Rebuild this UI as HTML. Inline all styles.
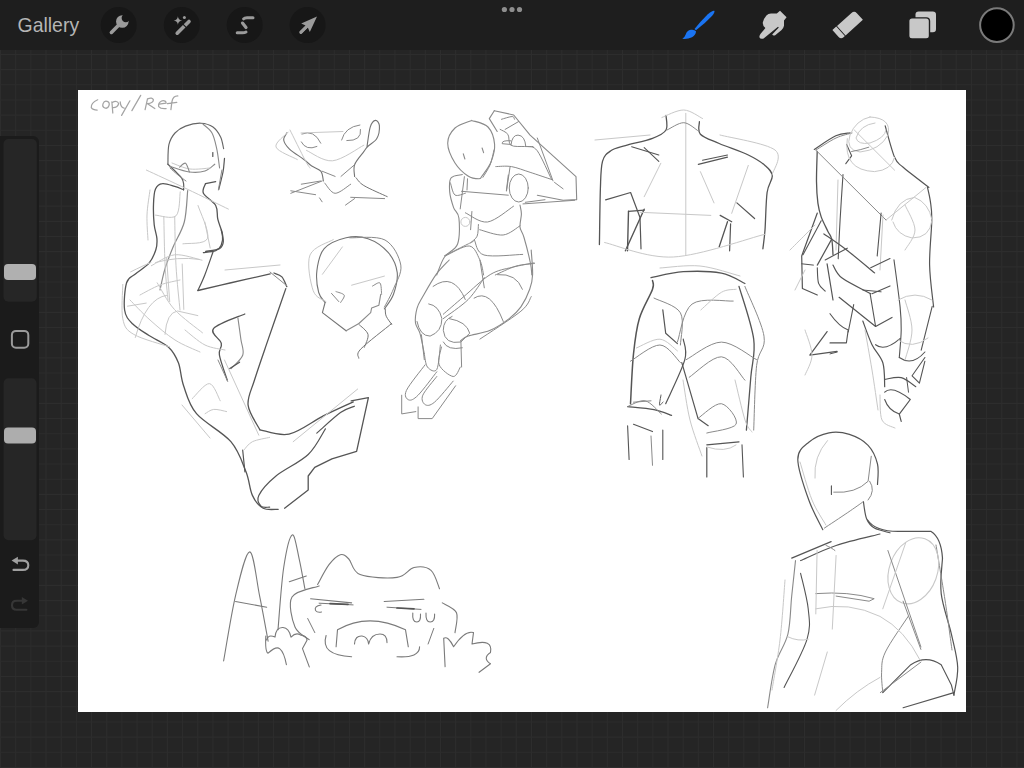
<!DOCTYPE html>
<html><head><meta charset="utf-8">
<style>
html,body{margin:0;padding:0;width:1024px;height:768px;overflow:hidden;background:#252525;font-family:"Liberation Sans",sans-serif;}
#grid{position:absolute;left:0;top:0}
#topbar{position:absolute;left:0;top:0;width:1024px;height:50px;background:#1e1e1e}
#canvas{position:absolute;left:78px;top:90px;width:888px;height:622px;background:#fff}
#side{position:absolute;left:0;top:136px;width:39px;height:492px;background:#1b1b1b;border-radius:0 6px 6px 0}
</style></head><body>
<svg id="grid" width="1024" height="768"><g stroke="#2d2d2d" stroke-width="1.1">
<line x1="0.53" y1="50" x2="0.53" y2="768"/>
<line x1="15.70" y1="50" x2="15.70" y2="768"/>
<line x1="30.87" y1="50" x2="30.87" y2="768"/>
<line x1="46.04" y1="50" x2="46.04" y2="768"/>
<line x1="61.21" y1="50" x2="61.21" y2="768"/>
<line x1="76.38" y1="50" x2="76.38" y2="768"/>
<line x1="91.55" y1="50" x2="91.55" y2="768"/>
<line x1="106.72" y1="50" x2="106.72" y2="768"/>
<line x1="121.89" y1="50" x2="121.89" y2="768"/>
<line x1="137.06" y1="50" x2="137.06" y2="768"/>
<line x1="152.23" y1="50" x2="152.23" y2="768"/>
<line x1="167.40" y1="50" x2="167.40" y2="768"/>
<line x1="182.57" y1="50" x2="182.57" y2="768"/>
<line x1="197.74" y1="50" x2="197.74" y2="768"/>
<line x1="212.91" y1="50" x2="212.91" y2="768"/>
<line x1="228.08" y1="50" x2="228.08" y2="768"/>
<line x1="243.25" y1="50" x2="243.25" y2="768"/>
<line x1="258.42" y1="50" x2="258.42" y2="768"/>
<line x1="273.59" y1="50" x2="273.59" y2="768"/>
<line x1="288.76" y1="50" x2="288.76" y2="768"/>
<line x1="303.93" y1="50" x2="303.93" y2="768"/>
<line x1="319.10" y1="50" x2="319.10" y2="768"/>
<line x1="334.27" y1="50" x2="334.27" y2="768"/>
<line x1="349.44" y1="50" x2="349.44" y2="768"/>
<line x1="364.61" y1="50" x2="364.61" y2="768"/>
<line x1="379.78" y1="50" x2="379.78" y2="768"/>
<line x1="394.95" y1="50" x2="394.95" y2="768"/>
<line x1="410.12" y1="50" x2="410.12" y2="768"/>
<line x1="425.29" y1="50" x2="425.29" y2="768"/>
<line x1="440.46" y1="50" x2="440.46" y2="768"/>
<line x1="455.63" y1="50" x2="455.63" y2="768"/>
<line x1="470.80" y1="50" x2="470.80" y2="768"/>
<line x1="485.97" y1="50" x2="485.97" y2="768"/>
<line x1="501.14" y1="50" x2="501.14" y2="768"/>
<line x1="516.31" y1="50" x2="516.31" y2="768"/>
<line x1="531.48" y1="50" x2="531.48" y2="768"/>
<line x1="546.65" y1="50" x2="546.65" y2="768"/>
<line x1="561.82" y1="50" x2="561.82" y2="768"/>
<line x1="576.99" y1="50" x2="576.99" y2="768"/>
<line x1="592.16" y1="50" x2="592.16" y2="768"/>
<line x1="607.33" y1="50" x2="607.33" y2="768"/>
<line x1="622.50" y1="50" x2="622.50" y2="768"/>
<line x1="637.67" y1="50" x2="637.67" y2="768"/>
<line x1="652.84" y1="50" x2="652.84" y2="768"/>
<line x1="668.01" y1="50" x2="668.01" y2="768"/>
<line x1="683.18" y1="50" x2="683.18" y2="768"/>
<line x1="698.35" y1="50" x2="698.35" y2="768"/>
<line x1="713.52" y1="50" x2="713.52" y2="768"/>
<line x1="728.69" y1="50" x2="728.69" y2="768"/>
<line x1="743.86" y1="50" x2="743.86" y2="768"/>
<line x1="759.03" y1="50" x2="759.03" y2="768"/>
<line x1="774.20" y1="50" x2="774.20" y2="768"/>
<line x1="789.37" y1="50" x2="789.37" y2="768"/>
<line x1="804.54" y1="50" x2="804.54" y2="768"/>
<line x1="819.71" y1="50" x2="819.71" y2="768"/>
<line x1="834.88" y1="50" x2="834.88" y2="768"/>
<line x1="850.05" y1="50" x2="850.05" y2="768"/>
<line x1="865.22" y1="50" x2="865.22" y2="768"/>
<line x1="880.39" y1="50" x2="880.39" y2="768"/>
<line x1="895.56" y1="50" x2="895.56" y2="768"/>
<line x1="910.73" y1="50" x2="910.73" y2="768"/>
<line x1="925.90" y1="50" x2="925.90" y2="768"/>
<line x1="941.07" y1="50" x2="941.07" y2="768"/>
<line x1="956.24" y1="50" x2="956.24" y2="768"/>
<line x1="971.41" y1="50" x2="971.41" y2="768"/>
<line x1="986.58" y1="50" x2="986.58" y2="768"/>
<line x1="1001.75" y1="50" x2="1001.75" y2="768"/>
<line x1="1016.92" y1="50" x2="1016.92" y2="768"/>
<line x1="0" y1="54.46" x2="1024" y2="54.46"/>
<line x1="0" y1="69.63" x2="1024" y2="69.63"/>
<line x1="0" y1="84.80" x2="1024" y2="84.80"/>
<line x1="0" y1="99.97" x2="1024" y2="99.97"/>
<line x1="0" y1="115.14" x2="1024" y2="115.14"/>
<line x1="0" y1="130.31" x2="1024" y2="130.31"/>
<line x1="0" y1="145.48" x2="1024" y2="145.48"/>
<line x1="0" y1="160.65" x2="1024" y2="160.65"/>
<line x1="0" y1="175.82" x2="1024" y2="175.82"/>
<line x1="0" y1="190.99" x2="1024" y2="190.99"/>
<line x1="0" y1="206.16" x2="1024" y2="206.16"/>
<line x1="0" y1="221.33" x2="1024" y2="221.33"/>
<line x1="0" y1="236.50" x2="1024" y2="236.50"/>
<line x1="0" y1="251.67" x2="1024" y2="251.67"/>
<line x1="0" y1="266.84" x2="1024" y2="266.84"/>
<line x1="0" y1="282.01" x2="1024" y2="282.01"/>
<line x1="0" y1="297.18" x2="1024" y2="297.18"/>
<line x1="0" y1="312.35" x2="1024" y2="312.35"/>
<line x1="0" y1="327.52" x2="1024" y2="327.52"/>
<line x1="0" y1="342.69" x2="1024" y2="342.69"/>
<line x1="0" y1="357.86" x2="1024" y2="357.86"/>
<line x1="0" y1="373.03" x2="1024" y2="373.03"/>
<line x1="0" y1="388.20" x2="1024" y2="388.20"/>
<line x1="0" y1="403.37" x2="1024" y2="403.37"/>
<line x1="0" y1="418.54" x2="1024" y2="418.54"/>
<line x1="0" y1="433.71" x2="1024" y2="433.71"/>
<line x1="0" y1="448.88" x2="1024" y2="448.88"/>
<line x1="0" y1="464.05" x2="1024" y2="464.05"/>
<line x1="0" y1="479.22" x2="1024" y2="479.22"/>
<line x1="0" y1="494.39" x2="1024" y2="494.39"/>
<line x1="0" y1="509.56" x2="1024" y2="509.56"/>
<line x1="0" y1="524.73" x2="1024" y2="524.73"/>
<line x1="0" y1="539.90" x2="1024" y2="539.90"/>
<line x1="0" y1="555.07" x2="1024" y2="555.07"/>
<line x1="0" y1="570.24" x2="1024" y2="570.24"/>
<line x1="0" y1="585.41" x2="1024" y2="585.41"/>
<line x1="0" y1="600.58" x2="1024" y2="600.58"/>
<line x1="0" y1="615.75" x2="1024" y2="615.75"/>
<line x1="0" y1="630.92" x2="1024" y2="630.92"/>
<line x1="0" y1="646.09" x2="1024" y2="646.09"/>
<line x1="0" y1="661.26" x2="1024" y2="661.26"/>
<line x1="0" y1="676.43" x2="1024" y2="676.43"/>
<line x1="0" y1="691.60" x2="1024" y2="691.60"/>
<line x1="0" y1="706.77" x2="1024" y2="706.77"/>
<line x1="0" y1="721.94" x2="1024" y2="721.94"/>
<line x1="0" y1="737.11" x2="1024" y2="737.11"/>
<line x1="0" y1="752.28" x2="1024" y2="752.28"/>
<line x1="0" y1="767.45" x2="1024" y2="767.45"/>
</g></svg>
<div id="canvas"></div>
<svg id="sk" width="1024" height="768" style="position:absolute;left:0;top:0" fill="none" stroke-linecap="round" stroke-linejoin="round">
<path d="M97.7 99.8 Q90.9 102.7 91.3 107.6 Q92.8 110 97.2 110" stroke="#a4a4a4" stroke-width="1.25"/>
<ellipse cx="106" cy="104.7" rx="3.1" ry="3.5" transform="rotate(20 106 104.7)" stroke="#a4a4a4" stroke-width="1.25"/>
<path d="M111.9 101.8 L112.8 113 M111.9 102.7 Q117.2 99.8 118.7 103.7 Q117.2 107.6 113.3 107.6" stroke="#a4a4a4" stroke-width="1.25"/>
<path d="M120.2 101.8 Q120.6 107.6 124.1 108.1 M129.9 100.8 L121.6 115.4" stroke="#a4a4a4" stroke-width="1.25"/>
<path d="M140.7 95.4 L131.9 110.6" stroke="#a4a4a4" stroke-width="1.25"/>
<path d="M147.5 98.8 L145.1 109.6 M147.5 98.8 Q152.4 96.9 153.4 99.8 Q153.4 103.2 147.5 103.7 L154.8 108.6" stroke="#a4a4a4" stroke-width="1.25"/>
<path d="M159.2 104.2 L166.1 103.2 Q166.1 100.3 162.1 100.8 Q157.8 102.7 158.7 106.6 Q160.7 109.1 166.1 108.6" stroke="#a4a4a4" stroke-width="1.25"/>
<path d="M177.8 95.9 Q172.9 95.9 171.9 101.8 L170.9 109.6 M167.5 103.7 L176.8 102.3" stroke="#a4a4a4" stroke-width="1.25"/>
<path d="M167.9 164.2 C168.1 160.9 167.7 149.9 168.9 144.7 C170.1 139.5 172.2 136.1 175.0 133.0 C177.8 129.9 181.2 127.7 185.5 126.1 C189.8 124.5 196.4 123.0 201.0 123.2 C205.6 123.4 209.7 124.7 213.0 127.0 C216.3 129.3 218.8 133.3 220.6 136.9 C222.4 140.5 223.1 146.7 223.6 148.6" stroke="#666" stroke-width="1.15"/>
<path d="M203.0 124.2 C204.5 125.7 209.7 128.9 212.0 133.0 C214.3 137.1 215.4 142.8 216.7 148.6 C218.0 154.4 219.1 164.8 219.6 168.0" stroke="#8a8a8a" stroke-width="1.1"/>
<path d="M224.5 158.4 C224.2 160.7 224.0 166.8 223.0 172.0 C222.0 177.2 219.4 186.7 218.7 189.6" stroke="#555555" stroke-width="1.2"/>
<path d="M221.9 170.0 L218.4 189.8" stroke="#8a8a8a" stroke-width="1.0"/>
<path d="M167.9 164.2 C169.1 165.3 172.7 168.7 175.0 171.0 C177.3 173.3 180.2 175.8 181.6 177.9 C183.0 180.0 183.3 181.7 183.6 183.7 C183.9 185.7 183.6 188.8 183.6 189.8" stroke="#5e5e5e" stroke-width="1.2"/>
<path d="M170.0 168.0 C171.3 169.2 175.3 172.8 178.0 175.0 C180.7 177.2 184.7 180.0 186.0 181.0" stroke="#8a8a8a" stroke-width="1.0"/>
<path d="M169.8 166.2 C173.1 167.2 183.5 171.2 189.4 172.0 C195.3 172.8 200.8 172.3 205.0 171.0 C209.2 169.7 213.2 165.3 214.8 164.2" stroke="#8a8a8a" stroke-width="1.1"/>
<path d="M172.0 163.0 C175.0 164.0 183.7 168.2 190.0 169.0 C196.3 169.8 206.7 168.2 210.0 168.0" stroke="#c8c8c8" stroke-width="1.0"/>
<path d="M179.6 167.1 C180.6 166.4 183.9 162.4 185.5 163.2 C187.1 164.0 188.8 170.5 189.4 172.0" stroke="#8a8a8a" stroke-width="1.1"/>
<path d="M212.8 152.5 L212.8 156.5" stroke="#555555" stroke-width="1.2"/>
<path d="M205.5 183.7 L215.7 181.6" stroke="#555555" stroke-width="1.2"/>
<path d="M205.5 183.7 C205.2 185.3 201.7 189.7 203.4 193.3 C205.1 196.9 213.3 201.2 215.7 205.5 C218.1 209.8 216.7 214.4 217.8 219.2 C218.9 224.0 221.9 230.0 222.5 234.3 C223.1 238.6 222.3 242.5 221.2 245.2 C220.1 247.9 218.7 249.4 215.7 250.7 C212.7 251.9 205.4 252.4 203.4 252.7" stroke="#555555" stroke-width="1.3"/>
<path d="M146.4 170.1 C153.2 173.2 173.3 182.5 187.0 189.0 C200.7 195.5 221.5 205.8 228.4 209.1" stroke="#c8c8c8" stroke-width="1.0"/>
<path d="M183.6 189.8 C182.1 189.2 178.2 187.4 174.7 186.4 C171.2 185.4 165.6 183.2 162.4 183.7 C159.2 184.1 157.0 185.7 155.5 189.1 C154.0 192.5 153.7 198.3 153.5 204.2 C153.3 210.1 153.6 219.0 154.2 224.7 C154.8 230.4 156.6 234.3 156.9 238.4 C157.2 242.5 157.2 245.4 155.9 249.5 C154.6 253.6 152.4 259.1 149.0 263.2 C145.6 267.3 139.1 270.8 135.4 274.0 C131.7 277.2 128.4 276.7 126.6 282.7 C124.8 288.7 123.6 303.1 124.6 310.0 C125.6 316.9 128.4 319.6 132.5 323.8 C136.6 328.1 143.0 331.6 149.0 335.5 C155.0 339.4 163.7 342.6 168.6 347.2 C173.5 351.8 175.9 356.4 178.4 362.8 C180.9 369.2 180.6 377.3 183.6 385.8 C186.6 394.3 188.6 404.4 196.5 413.7 C204.4 423.0 222.7 432.0 230.9 441.7 C239.2 451.4 242.4 462.9 246.0 471.8 C249.6 480.8 249.5 489.3 252.4 495.4 C255.3 501.5 258.9 505.9 263.2 508.2 C267.5 510.5 275.7 509.1 278.2 509.3" stroke="#555555" stroke-width="1.3"/>
<path d="M150.0 190.0 C149.5 194.2 147.3 206.7 147.0 215.0 C146.7 223.3 147.8 235.8 148.0 240.0" stroke="#c8c8c8" stroke-width="1.0"/>
<path d="M187.7 190.5 C187.1 195.8 186.7 212.7 184.3 222.0 C181.9 231.3 176.5 238.9 173.3 246.6 C170.1 254.3 167.3 261.2 165.1 268.4 C162.9 275.6 160.8 286.4 160.0 290.0" stroke="#8a8a8a" stroke-width="1.2"/>
<path d="M155.5 215.1 C158.9 215.2 171.9 219.7 176.0 215.8 C180.1 211.9 179.5 195.9 180.2 191.9" stroke="#c8c8c8" stroke-width="1.0"/>
<path d="M163.8 216.5 C164.0 224.7 164.4 251.8 165.1 265.7 C165.8 279.6 167.5 294.3 168.0 300.0" stroke="#c8c8c8" stroke-width="1.0"/>
<path d="M174.7 216.5 C174.9 224.7 175.1 250.1 176.0 265.7 C176.9 281.3 179.3 302.6 180.0 310.0" stroke="#c8c8c8" stroke-width="1.0"/>
<path d="M198.0 205.5 C199.6 211.0 210.0 232.0 207.5 238.4 C205.0 244.8 187.0 242.9 182.9 243.8" stroke="#c8c8c8" stroke-width="1.0"/>
<path d="M151.4 265.7 C155.3 263.9 166.3 255.7 174.7 254.8 C183.1 253.9 197.4 259.3 202.0 260.2" stroke="#c8c8c8" stroke-width="1.0"/>
<path d="M204.8 222.0 L210.2 248.0" stroke="#c8c8c8" stroke-width="1.0"/>
<path d="M221.3 230.0 C221.6 231.9 223.6 238.6 223.3 241.7 C223.0 244.8 222.3 247.0 219.4 248.6 C216.5 250.2 208.0 251.0 205.7 251.5" stroke="#555555" stroke-width="1.3"/>
<path d="M213.0 252.0 C211.6 255.8 207.3 268.6 204.8 275.0 C202.3 281.4 199.1 287.9 197.9 290.5" stroke="#555555" stroke-width="1.2"/>
<path d="M197.9 290.5 C203.2 289.2 217.9 285.8 230.0 283.0 C242.1 280.2 263.5 275.4 270.2 273.9" stroke="#555555" stroke-width="1.3"/>
<path d="M274.0 273.0 C275.3 273.6 279.8 274.6 281.9 276.9 C284.0 279.2 286.0 285.0 286.8 286.6" stroke="#555555" stroke-width="1.3"/>
<path d="M270.0 272.0 L286.8 285.7" stroke="#8a8a8a" stroke-width="1.0"/>
<path d="M225.0 270.0 L280.0 265.0" stroke="#c8c8c8" stroke-width="1.0"/>
<path d="M285.8 288.6 C282.9 297.1 273.4 324.2 268.2 339.4 C263.0 354.6 257.9 369.1 254.5 380.0 C251.2 390.9 247.2 396.8 248.1 405.1 C249.0 413.4 257.9 425.7 259.9 429.8" stroke="#555555" stroke-width="1.3"/>
<path d="M244.8 314.0 C239.6 316.4 217.4 323.7 213.5 328.6 C209.6 333.5 220.3 338.9 221.3 343.3 C222.3 347.7 218.4 348.9 219.4 355.0 C220.4 361.1 225.9 375.8 227.2 380.0" stroke="#555555" stroke-width="1.3"/>
<path d="M237.9 317.9 C238.4 321.5 240.1 333.2 240.9 339.4 C241.7 345.6 244.4 350.1 242.8 355.0 C241.2 359.9 233.1 366.4 231.1 368.7" stroke="#8a8a8a" stroke-width="1.1"/>
<path d="M135.3 337.5 Q146.25 298.4 166.6 295.3" stroke="#c8c8c8" stroke-width="1.0"/>
<path d="M165 334.4 Q166.6 312.5 177.5 311 L197.8 315.6" stroke="#c8c8c8" stroke-width="1.0"/>
<path d="M166.6 257.8 L169.7 301.6" stroke="#c8c8c8" stroke-width="1.0"/>
<path d="M182.2 264.0 L183.8 309.4" stroke="#c8c8c8" stroke-width="1.0"/>
<path d="M157.2 282.8 C160.1 287.2 166.8 301.1 174.4 309.4 C182.0 317.7 197.8 328.9 202.5 332.8" stroke="#c8c8c8" stroke-width="1.0"/>
<path d="M127.5 306.2 L146.2 303.1" stroke="#c8c8c8" stroke-width="1.0"/>
<path d="M155.6 262.5 Q177.5 256.25 199.4 259.4" stroke="#c8c8c8" stroke-width="1.0"/>
<path d="M122.8 284.4 C122.8 290.1 121.0 310.4 122.8 318.8 C124.6 327.1 125.9 329.7 133.8 334.4 C141.6 339.1 163.7 344.8 169.7 346.9" stroke="#c8c8c8" stroke-width="1.0"/>
<path d="M130.6 271.9 Q143.1 265.6 150.9 262.5" stroke="#c8c8c8" stroke-width="1.0"/>
<path d="M140.0 295.0 C143.3 293.3 153.3 287.5 160.0 285.0 C166.7 282.5 176.7 280.8 180.0 280.0" stroke="#c8c8c8" stroke-width="1.0"/>
<path d="M130.0 300.0 C133.3 303.3 142.5 313.3 150.0 320.0 C157.5 326.7 166.7 334.7 175.0 340.0 C183.3 345.3 195.8 350.0 200.0 352.0" stroke="#c8c8c8" stroke-width="1.0"/>
<path d="M185.0 330.0 C188.3 332.5 198.3 341.7 205.0 345.0 C211.7 348.3 221.7 349.2 225.0 350.0" stroke="#c8c8c8" stroke-width="1.0"/>
<path d="M218.0 360.0 L227.7 381.5" stroke="#8a8a8a" stroke-width="1.0"/>
<path d="M229.8 368.6 L239.6 362.2" stroke="#555555" stroke-width="1.2"/>
<path d="M224.5 360.0 L258.8 435.2" stroke="#c8c8c8" stroke-width="1.0"/>
<path d="M192.2 398.7 C195.1 396.2 204.7 383.2 209.4 383.6 C214.1 384.0 218.4 397.9 220.2 400.8" stroke="#c8c8c8" stroke-width="1.0"/>
<path d="M205.1 413.7 C206.5 413.0 210.1 409.8 213.7 409.4 C217.3 409.0 224.4 411.2 226.6 411.6" stroke="#c8c8c8" stroke-width="1.0"/>
<path d="M182.0 405.0 L210.0 438.0" stroke="#c8c8c8" stroke-width="1.0"/>
<path d="M259.9 429.8 C264.8 430.5 278.4 436.4 289.0 434.1 C299.6 431.8 312.6 421.3 323.3 415.9 C334.0 410.5 348.3 404.2 353.3 401.9" stroke="#555555" stroke-width="1.3"/>
<path d="M351.2 400.8 L368.4 397.6 L356.6 451.3 L331.9 458.8 L314.7 467.4 L308.2 476.0 L308.2 490.0 L284.6 508.2" stroke="#555555" stroke-width="1.3"/>
<path d="M354.4 406.2 C352.1 407.3 346.8 408.1 340.5 412.6 C334.2 417.1 320.8 429.7 316.8 433.1" stroke="#555555" stroke-width="1.2"/>
<path d="M325.4 428.8 C322.5 433.1 316.4 446.6 308.2 454.5 C300.0 462.4 284.2 469.2 276.0 476.0 C267.8 482.8 261.3 490.4 258.8 495.4 C256.3 500.4 259.2 504.2 261.0 506.2 C262.8 508.2 268.2 507.0 269.6 507.2" stroke="#555555" stroke-width="1.2"/>
<path d="M242.7 450.2 L244.9 471.8" stroke="#555555" stroke-width="1.2"/>
<path d="M243.8 450.2 C245.2 448.8 248.1 443.8 252.4 441.7 C256.7 439.6 266.7 438.1 269.6 437.4" stroke="#c8c8c8" stroke-width="1.0"/>
<path d="M293.2 441.7 L357.7 389.0" stroke="#c8c8c8" stroke-width="1.0"/>
<path d="M286.9 132.8 C286.4 134.0 283.3 137.3 283.7 140.0 C284.1 142.7 286.1 145.8 289.5 149.1 C292.9 152.3 300.2 156.7 303.9 159.5 C307.6 162.3 308.9 164.1 311.7 166.0 C314.5 167.9 318.9 168.7 320.8 171.2 C322.8 173.7 323.0 179.4 323.4 181.0" stroke="#747474" stroke-width="1.1"/>
<path d="M354.6 176.4 C354.6 174.4 353.1 168.8 354.6 164.7 C356.1 160.6 361.6 154.7 363.8 151.7 C366.0 148.7 365.5 148.7 367.7 146.5 C369.9 144.3 374.9 142.1 376.8 138.6 C378.8 135.1 379.6 128.6 379.4 125.6 C379.2 122.6 377.0 120.2 375.5 120.4 C374.0 120.6 371.7 122.6 370.3 126.9 C368.9 131.2 367.6 143.2 367.0 146.5" stroke="#747474" stroke-width="1.1"/>
<path d="M301.9 134 Q314 129 320.8 143.2" stroke="#8a8a8a" stroke-width="1.0"/>
<path d="M301.3 141.9 Q306 151 316.9 146.5" stroke="#8a8a8a" stroke-width="1.0"/>
<path d="M341.6 140 Q345 127 359.9 125" stroke="#8a8a8a" stroke-width="1.0"/>
<path d="M360.5 129.5 Q362 141 346.8 140.6" stroke="#8a8a8a" stroke-width="1.0"/>
<path d="M306.5 150.4 C310.8 152.1 322.9 161.7 332.5 160.8 C342.1 159.9 358.6 147.8 363.8 145.2" stroke="#c8c8c8" stroke-width="1.0"/>
<path d="M301.0 133.0 L342.9 131.5" stroke="#c8c8c8" stroke-width="1.0"/>
<path d="M324.7 183.0 C326.4 184.7 330.8 193.1 335.1 193.3 C339.4 193.5 348.1 185.7 350.7 184.2" stroke="#8a8a8a" stroke-width="1.0"/>
<path d="M322.1 171.2 L335.1 176.4" stroke="#8a8a8a" stroke-width="1.0"/>
<path d="M341.0 176.4 L354.6 164.7" stroke="#8a8a8a" stroke-width="1.0"/>
<path d="M356.0 177.7 C357.3 179.0 358.6 182.3 363.8 185.5 C369.0 188.7 383.3 194.8 387.2 196.6" stroke="#747474" stroke-width="1.0"/>
<path d="M350.7 197.3 L384.6 198.6" stroke="#8a8a8a" stroke-width="1.0"/>
<path d="M345.5 205.1 L354.6 198.6" stroke="#8a8a8a" stroke-width="1.0"/>
<path d="M290.8 193.3 L322.1 181.0" stroke="#8a8a8a" stroke-width="1.0"/>
<path d="M301.3 184.2 L320.8 181.0" stroke="#8a8a8a" stroke-width="1.0"/>
<path d="M290.8 190.8 L315.6 194.7" stroke="#8a8a8a" stroke-width="1.0"/>
<path d="M319.5 197.9 L322.1 201.8" stroke="#8a8a8a" stroke-width="1.0"/>
<path d="M288.2 132.1 C286.2 134.6 274.5 142.4 276.0 147.0 C277.5 151.6 293.8 157.4 297.3 159.5" stroke="#c8c8c8" stroke-width="1.0"/>
<path d="M290.0 130.0 C292.5 135.0 301.7 153.7 305.0 160.0 C308.3 166.3 309.2 166.7 310.0 168.0" stroke="#c8c8c8" stroke-width="1.0"/>
<path d="M325.1 302.5 C324.0 300.8 320.1 297.8 318.7 292.5 C317.3 287.2 316.0 277.9 316.9 270.6 C317.8 263.3 319.3 254.2 324.2 248.7 C329.1 243.2 338.8 239.5 346.1 237.8 C353.4 236.1 361.0 236.3 368.0 238.7 C375.0 241.1 383.2 246.8 388.1 252.4 C393.0 258.0 396.3 265.4 397.2 272.4 C398.1 279.4 395.6 288.2 393.5 294.3 C391.4 300.4 385.9 306.5 384.4 308.9" stroke="#747474" stroke-width="1.1"/>
<path d="M325.1 302.5 L322.4 312.6 L346.1 330.8" stroke="#747474" stroke-width="1.1"/>
<path d="M346.1 330.8 L358.9 323.5 L370.7 312.6 L371.6 308.0 L378.9 305.2 L380.7 294.3" stroke="#8a8a8a" stroke-width="1.1"/>
<path d="M372.5 286.1 C373.8 285.6 378.5 281.6 380.0 283.0 C381.5 284.4 381.3 292.4 381.6 294.3" stroke="#8a8a8a" stroke-width="1.0"/>
<path d="M331.5 293.4 L338.8 301.6" stroke="#8a8a8a" stroke-width="1.0"/>
<path d="M336.0 291.6 C337.4 292.2 343.4 293.4 344.2 295.2 C345.0 297.0 341.2 301.3 340.6 302.5" stroke="#8a8a8a" stroke-width="1.0"/>
<path d="M358.9 324.4 C360.4 326.1 367.1 330.6 368.0 334.4 C368.9 338.2 364.9 345.1 364.3 347.3" stroke="#747474" stroke-width="1.0"/>
<path d="M391.7 323.5 C386.5 327.8 366.2 343.3 360.7 349.1 C355.2 354.9 359.2 356.7 358.9 358.2" stroke="#747474" stroke-width="1.0"/>
<path d="M385.3 308.9 C385.4 310.1 385.1 313.6 386.2 316.2 C387.3 318.8 390.8 323.0 391.7 324.4" stroke="#747474" stroke-width="1.0"/>
<path d="M333.3 239.6 C329.4 242.2 313.4 246.5 310.0 255.0 C306.6 263.5 310.5 282.9 313.2 290.7 C315.9 298.5 323.9 299.8 326.0 301.6" stroke="#c8c8c8" stroke-width="1.0"/>
<path d="M349.7 237.8 C355.6 238.2 376.5 235.4 385.0 240.0 C393.5 244.6 399.4 257.0 400.8 265.1 C402.2 273.2 396.2 281.8 393.5 288.8 C390.8 295.8 385.9 304.1 384.4 307.1" stroke="#8a8a8a" stroke-width="1.0"/>
<path d="M351.6 285.2 L384.4 276.1" stroke="#c8c8c8" stroke-width="1.0"/>
<path d="M342.4 246.9 L322.4 274.3" stroke="#c8c8c8" stroke-width="1.0"/>
<path d="M471.7 120.4 C474.4 121.5 484.2 123.0 488.0 127.0 C491.8 131.0 494.1 138.6 494.6 144.4 C495.1 150.2 493.1 156.7 491.0 162.0 C488.9 167.3 484.0 173.2 482.0 176.0 C480.0 178.8 481.3 178.8 479.0 178.8 C476.7 178.8 472.0 178.6 468.0 176.0 C464.0 173.4 458.4 168.4 455.0 163.0 C451.6 157.6 447.7 149.1 447.7 143.3 C447.7 137.5 451.0 131.8 455.0 128.0 C459.0 124.2 468.9 121.7 471.7 120.4" stroke="#8a8a8a" stroke-width="1.1"/>
<path d="M494.0 150.0 C493.3 152.5 491.9 160.4 490.0 165.0 C488.1 169.6 484.1 175.2 482.9 177.3" stroke="#8a8a8a" stroke-width="1.0"/>
<path d="M463.3 153.8 L464.9 159.0" stroke="#8a8a8a" stroke-width="1.1"/>
<path d="M482.1 148.0 L483.6 152.7" stroke="#8a8a8a" stroke-width="1.1"/>
<path d="M464.4 176.7 L460.2 208.9" stroke="#8a8a8a" stroke-width="1.0"/>
<path d="M467.5 178.8 L467.0 190.0" stroke="#8a8a8a" stroke-width="1.0"/>
<path d="M462.3 174.6 C460.4 175.2 453.1 175.1 451.0 178.0 C448.9 180.9 449.3 187.0 449.7 191.9 C450.1 196.8 452.1 203.2 453.6 207.6 C455.1 211.9 458.2 211.9 458.9 218.0 C459.6 224.1 460.0 237.5 457.6 244.0 C455.2 250.5 448.0 251.8 444.5 257.0 C441.0 262.2 438.0 272.0 436.7 275.0" stroke="#8a8a8a" stroke-width="1.1"/>
<path d="M450.4 182.8 C451.2 184.8 452.5 193.3 455.0 195.0 C457.5 196.7 463.7 193.5 465.4 193.2" stroke="#8a8a8a" stroke-width="1.0"/>
<path d="M461.5 191.3 L508.3 195.2" stroke="#8a8a8a" stroke-width="1.0"/>
<ellipse cx="518.75" cy="188" rx="9.5" ry="14" transform="rotate(0 518.75 188)" stroke="#8a8a8a" stroke-width="1.0"/>
<path d="M508.3 175.0 L506.4 190.6" stroke="#8a8a8a" stroke-width="1.0"/>
<path d="M465.4 212.8 C469.1 214.3 479.5 223.1 487.5 222.0 C495.5 220.9 509.2 208.9 513.5 206.2" stroke="#8a8a8a" stroke-width="1.0"/>
<path d="M479.7 229.7 C483.6 230.6 496.4 235.7 503.1 235.0 C509.8 234.3 517.2 227.3 520.0 225.8" stroke="#8a8a8a" stroke-width="1.0"/>
<path d="M520.0 205.0 C520.2 206.5 521.4 210.3 521.4 214.0 C521.4 217.7 519.6 223.2 520.0 227.1 C520.4 231.0 522.2 231.4 524.0 237.5 C525.8 243.6 529.2 257.2 530.5 263.5 C531.8 269.8 531.6 273.1 531.8 275.0" stroke="#8a8a8a" stroke-width="1.1"/>
<path d="M474.5 240.1 C476.1 242.6 476.0 252.6 484.0 255.0 C492.0 257.4 516.2 254.5 522.7 254.4" stroke="#8a8a8a" stroke-width="1.0"/>
<ellipse cx="465.4" cy="221.9" rx="4.5" ry="4.5" transform="rotate(0 465.4 221.9)" stroke="#c8c8c8" stroke-width="1.0"/>
<path d="M471.9 211.5 L470.6 229.7" stroke="#8a8a8a" stroke-width="1.0"/>
<path d="M478.4 224.5 C478.2 226.4 478.4 233.2 477.1 236.2 C475.8 239.2 471.7 241.6 470.6 242.7" stroke="#8a8a8a" stroke-width="1.0"/>
<path d="M444.5 255.7 C448.0 254.0 460.6 247.7 465.4 245.3 C470.2 242.9 471.9 242.1 473.2 241.4" stroke="#8a8a8a" stroke-width="1.0"/>
<path d="M445.8 255.7 C449.7 254.1 463.7 245.3 469.3 246.0 C474.9 246.7 477.3 254.8 479.7 259.6 C482.1 264.4 483.0 272.4 483.6 275.0" stroke="#8a8a8a" stroke-width="1.0"/>
<path d="M495.3 275.0 C498.8 273.5 509.6 268.0 516.1 266.1 C522.6 264.2 531.4 263.9 534.4 263.5" stroke="#8a8a8a" stroke-width="1.0"/>
<path d="M494.3 110.7 L489.3 118.6 L497.2 131.5" stroke="#8a8a8a" stroke-width="1.1"/>
<path d="M494.3 110.7 L513.7 115.0 L530.1 135.1 L576.0 176.6 L576.7 199.6 L563.1 200.3 L537.3 195.3" stroke="#8a8a8a" stroke-width="1.1"/>
<path d="M527.3 146.5 C529.0 147.2 533.2 145.3 537.3 150.8 C541.3 156.3 549.2 174.7 551.6 179.5" stroke="#8a8a8a" stroke-width="1.0"/>
<path d="M537.3 138.0 L553.0 180.9" stroke="#8a8a8a" stroke-width="1.0"/>
<path d="M495.8 166.6 C498.4 166.6 505.8 165.6 511.5 166.6 C517.2 167.6 523.4 170.2 530.1 172.3 C536.8 174.5 548.0 178.3 551.6 179.5" stroke="#8a8a8a" stroke-width="1.0"/>
<path d="M554.5 182.4 L563.1 188.8" stroke="#8a8a8a" stroke-width="1.0"/>
<path d="M500.1 129.4 C501.4 130.2 506.1 131.8 507.9 134.4 C509.7 137.0 508.1 143.1 510.8 145.1 C513.5 147.1 520.7 146.3 524.4 146.5 C528.1 146.7 531.6 146.5 533.0 146.5" stroke="#8a8a8a" stroke-width="1.0"/>
<path d="M510.8 140.8 Q501.5 140.1 502.2 143.7 L510.1 144.4" stroke="#8a8a8a" stroke-width="1.0"/>
<path d="M511 145 Q512 135 518 135.1 Q525 135.5 525.8 146.5" stroke="#8a8a8a" stroke-width="1.0"/>
<path d="M505.1 129.4 L518.7 121.5" stroke="#8a8a8a" stroke-width="1.0"/>
<path d="M501.5 119.3 C503.3 118.8 510.1 116.5 512.2 116.5 C514.4 116.5 514.0 118.8 514.4 119.3" stroke="#8a8a8a" stroke-width="1.0"/>
<path d="M510.1 166.6 L506.5 191.0" stroke="#8a8a8a" stroke-width="1.0"/>
<path d="M523.0 203.9 L574.6 200.3" stroke="#8a8a8a" stroke-width="1.0"/>
<path d="M525.3 202.3 L545.0 199.7" stroke="#8a8a8a" stroke-width="1.0"/>
<path d="M449.2 260.0 C447.0 262.4 440.4 268.5 436.0 274.6 C431.6 280.7 426.0 291.0 422.8 296.6 C419.6 302.2 418.2 303.9 417.0 308.3 C415.8 312.7 415.0 318.9 415.5 323.0 C416.0 327.1 418.4 328.1 419.9 333.2 C421.4 338.3 423.6 350.3 424.3 353.7" stroke="#8a8a8a" stroke-width="1.1"/>
<path d="M417 321.5 Q419.9 336.1 430.1 336.1 Q441.9 331.7 441.9 318.6 Q438.9 305.4 428.7 303.9" stroke="#8a8a8a" stroke-width="1.0"/>
<path d="M443.3 314.2 C446.7 311.3 456.0 303.2 463.8 296.6 C471.6 290.0 482.1 279.5 490.2 274.6 C498.2 269.7 504.8 269.2 512.1 267.3 C519.4 265.4 530.4 263.6 534.1 262.9" stroke="#8a8a8a" stroke-width="1.0"/>
<path d="M443.3 318.6 C447.4 315.4 461.4 306.3 468.2 299.5 C475.0 292.7 481.6 281.2 484.3 277.6" stroke="#8a8a8a" stroke-width="1.0"/>
<path d="M531.2 250.0 C531.4 254.1 532.9 268.1 532.6 274.6 C532.4 281.2 531.7 283.9 529.7 289.3 C527.8 294.7 524.3 302.0 520.9 306.9 C517.5 311.8 514.3 314.7 509.2 318.6 C504.1 322.5 497.0 327.4 490.2 330.3 C483.4 333.2 473.1 334.4 468.2 336.1 C463.3 337.8 462.1 339.8 460.9 340.5" stroke="#8a8a8a" stroke-width="1.1"/>
<path d="M531.2 296.6 C529.5 299.0 529.5 304.1 520.9 311.2 C512.3 318.3 486.7 334.5 479.9 339.1" stroke="#8a8a8a" stroke-width="1.0"/>
<path d="M449.2 318.6 Q466.7 321.5 469.7 333.2 L460.9 342 Q444.8 344.9 443.3 330.3 Q443.3 320 452.1 316.4" stroke="#8a8a8a" stroke-width="1.0"/>
<path d="M433.1 286.4 Q453.6 271.7 465.3 299.5 M474.1 298.1 Q490.2 287.8 503.3 321.5 M497.5 274.6 Q516.5 273.2 522.4 289.3" stroke="#8a8a8a" stroke-width="1.0"/>
<path d="M479.9 260.0 L484.3 287.8" stroke="#8a8a8a" stroke-width="1.0"/>
<path d="M421.4 334.7 L424.3 359.6" stroke="#8a8a8a" stroke-width="1.0"/>
<path d="M443.3 342 Q447.7 350.8 462.3 347.8" stroke="#8a8a8a" stroke-width="1.0"/>
<path d="M460.9 340.5 L461.6 367.0" stroke="#8a8a8a" stroke-width="1.0"/>
<path d="M424.3 353.7 C424.8 355.9 425.4 364.5 427.5 367.1 C429.6 369.7 434.7 373.1 436.8 369.4 C438.9 365.7 439.8 349.1 440.4 345.0" stroke="#8a8a8a" stroke-width="1.0"/>
<path d="M441.5 347.0 C441.1 350.0 437.2 359.9 439.2 364.8 C441.1 369.7 449.7 376.1 453.2 376.5 C456.7 376.9 459.1 368.7 460.3 367.1" stroke="#8a8a8a" stroke-width="1.0"/>
<path d="M425.1 364.8 C422.0 369.1 409.1 384.6 406.4 390.5 C403.7 396.4 406.8 399.1 408.7 399.9 C410.6 400.7 413.4 399.9 418.1 395.2 C422.8 390.5 433.7 375.7 436.8 371.8" stroke="#8a8a8a" stroke-width="1.0"/>
<path d="M436.8 376.5 C434.5 379.6 424.8 390.5 422.8 395.2 C420.9 399.9 423.2 403.4 425.1 404.6 C427.1 405.8 429.8 406.1 434.5 402.2 C439.2 398.3 450.1 384.6 453.2 381.1" stroke="#8a8a8a" stroke-width="1.0"/>
<path d="M401.7 395.2 L401.7 413.9 L415.8 411.6" stroke="#8a8a8a" stroke-width="1.0"/>
<path d="M418.1 406.9 L418.1 418.6 L432.2 418.6 L455.6 385.8" stroke="#8a8a8a" stroke-width="1.0"/>
<path d="M666.0 115.4 C666.0 117.8 668.2 126.2 666.0 130.0 C663.8 133.8 659.3 135.7 652.5 138.3 C645.7 140.9 632.4 143.5 625.4 145.6 C618.4 147.7 614.6 148.2 610.8 150.8 C607.0 153.4 604.2 155.1 602.5 161.3 C600.8 167.6 600.9 174.4 600.4 188.3 C599.9 202.2 599.6 235.2 599.4 244.6" stroke="#555555" stroke-width="1.3"/>
<path d="M605.6 199.8 L630.6 192.5 L640.0 217.5 L641.0 248.8" stroke="#555555" stroke-width="1.2"/>
<path d="M628.5 211.3 L627.5 250.8" stroke="#555555" stroke-width="1.4"/>
<path d="M644.2 209.2 L625.4 250.8" stroke="#555555" stroke-width="1.4"/>
<path d="M628.5 211.3 L644.2 210.2" stroke="#555555" stroke-width="1.2"/>
<path d="M699.4 121.7 C699.6 123.8 697.1 130.6 700.4 134.2 C703.7 137.8 711.2 140.0 719.2 143.5 C727.2 147.0 740.7 151.3 748.3 155.0 C755.9 158.7 761.0 161.9 765.0 165.4 C769.0 168.9 771.9 171.3 772.3 175.8 C772.6 180.3 768.3 183.5 767.1 192.5 C765.9 201.5 765.7 220.6 765.0 230.0 C764.3 239.4 763.2 245.7 762.9 248.8" stroke="#555555" stroke-width="1.3"/>
<path d="M720.2 215.4 L731.7 221.7" stroke="#555555" stroke-width="1.3"/>
<path d="M727.5 221.7 L719.2 246.7" stroke="#555555" stroke-width="1.3"/>
<path d="M730.6 223.8 L729.6 250.8" stroke="#555555" stroke-width="1.2"/>
<path d="M736.9 202.9 L754.6 218.5" stroke="#555555" stroke-width="1.2"/>
<path d="M685.8 113.3 L685.8 255.0" stroke="#c8c8c8" stroke-width="1.0"/>
<path d="M661.9 117.5 C665.5 116.2 677.0 109.8 683.8 110.0 C690.6 110.2 699.4 117.1 702.5 118.5" stroke="#c8c8c8" stroke-width="1.0"/>
<path d="M667.1 130.0 C669.9 128.8 678.6 122.5 683.8 122.7 C689.0 122.9 695.9 129.6 698.3 131.0" stroke="#8a8a8a" stroke-width="1.0"/>
<path d="M631.7 146.7 L658.8 155.0" stroke="#555555" stroke-width="1.1"/>
<path d="M644.2 147.7 L658.8 161.3" stroke="#555555" stroke-width="1.1"/>
<path d="M702.5 160.2 L727.5 155.0" stroke="#555555" stroke-width="1.1"/>
<path d="M698.3 164.4 L727.5 157.1" stroke="#555555" stroke-width="1.1"/>
<path d="M660.8 163.3 L644.2 196.7" stroke="#c8c8c8" stroke-width="1.0"/>
<path d="M700.4 171.7 L714.0 202.9" stroke="#c8c8c8" stroke-width="1.0"/>
<path d="M748.3 165.4 L731.7 213.3" stroke="#c8c8c8" stroke-width="1.0"/>
<path d="M640.0 212.3 L710.8 215.4" stroke="#c8c8c8" stroke-width="1.0"/>
<path d="M604.6 242.5 C616.0 244.9 646.6 258.4 673.3 257.0 C700.0 255.6 749.7 238.0 765.0 234.2" stroke="#c8c8c8" stroke-width="1.0"/>
<path d="M595.0 140.0 L650.0 135.0" stroke="#c8c8c8" stroke-width="1.0"/>
<path d="M720.0 135.0 C729.2 137.5 766.3 143.3 775.0 150.0 C783.7 156.7 772.5 170.8 772.0 175.0" stroke="#c8c8c8" stroke-width="1.0"/>
<path d="M651.0 277.6 C656.4 276.6 671.6 272.4 683.3 271.7 C695.0 271.0 711.1 271.2 721.4 273.2 C731.7 275.2 741.0 281.8 744.9 283.5" stroke="#555555" stroke-width="1.3"/>
<path d="M652.5 280.5 C652.5 282.0 654.7 282.9 652.5 289.3 C650.3 295.7 642.5 307.9 639.3 318.7 C636.1 329.4 635.0 339.6 633.5 353.8 C632.0 368.0 631.0 395.4 630.5 403.7" stroke="#555555" stroke-width="1.5"/>
<path d="M739.0 286.4 C741.5 295.2 751.7 324.0 753.7 339.2 C755.7 354.4 752.0 362.1 750.8 377.3 C749.6 392.5 747.1 421.3 746.4 430.1" stroke="#555555" stroke-width="1.3"/>
<path d="M744.9 286.4 C748.1 294.7 762.0 323.0 764.0 336.2 C766.0 349.4 758.3 350.0 756.6 365.6 C754.9 381.2 754.2 419.4 753.7 430.1" stroke="#8a8a8a" stroke-width="1.0"/>
<path d="M662.8 309.9 L665.7 333.3 L677.4 343.6" stroke="#555555" stroke-width="1.2"/>
<path d="M683.3 339.2 C683.5 342.6 687.7 348.9 684.8 359.7 C681.9 370.4 668.9 396.4 665.7 403.7" stroke="#555555" stroke-width="1.2"/>
<path d="M681.8 362.6 L698.0 418.4 L708.2 425.7" stroke="#555555" stroke-width="1.2"/>
<path d="M677.4 342.1 C679.9 335.8 682.8 310.8 692.1 304.0 C701.4 297.2 726.4 301.6 733.2 301.1" stroke="#8a8a8a" stroke-width="1.0"/>
<path d="M654.0 298.1 C658.4 300.6 676.0 305.0 680.4 312.8 C684.8 320.6 680.4 339.6 680.4 345.0" stroke="#8a8a8a" stroke-width="1.0"/>
<path d="M630.5 361.2 C635.4 358.5 651.6 344.8 659.9 345.0 C668.2 345.2 677.0 359.7 680.4 362.6" stroke="#8a8a8a" stroke-width="1.0"/>
<path d="M636.4 348.0 C640.3 346.5 653.1 338.7 659.9 339.2 C666.7 339.7 674.5 348.9 677.4 350.9" stroke="#c8c8c8" stroke-width="1.0"/>
<path d="M686.2 359.7 C692.1 356.8 709.7 342.1 721.4 342.1 C733.1 342.1 750.7 356.8 756.6 359.7" stroke="#8a8a8a" stroke-width="1.0"/>
<path d="M689.2 377.3 C694.6 373.9 712.1 356.3 721.4 356.8 C730.7 357.3 741.0 376.3 744.9 380.2" stroke="#8a8a8a" stroke-width="1.0"/>
<path d="M627.6 406.6 C632.0 407.1 646.7 408.1 654.0 409.6 C661.3 411.1 668.7 414.4 671.6 415.4" stroke="#555555" stroke-width="1.2"/>
<path d="M627.6 406.6 C630.5 405.6 639.6 399.6 645.2 400.8 C650.8 402.0 658.6 411.8 661.3 414.0" stroke="#8a8a8a" stroke-width="1.0"/>
<path d="M633.5 402.2 L651.0 400.8" stroke="#8a8a8a" stroke-width="1.0"/>
<path d="M627.6 425.7 L629.1 459.4" stroke="#555555" stroke-width="1.1"/>
<path d="M633.5 424.2 L652.5 431.6" stroke="#555555" stroke-width="1.1"/>
<path d="M651.0 436.0 L652.5 465.3" stroke="#8a8a8a" stroke-width="1.0"/>
<path d="M662.8 430.1 L662.8 459.4" stroke="#555555" stroke-width="1.1"/>
<path d="M698.0 418.4 C701.9 415.9 715.0 402.7 721.4 403.7 C727.8 404.7 738.5 419.3 736.1 424.2 C733.7 429.1 711.7 431.5 706.8 433.0" stroke="#8a8a8a" stroke-width="1.0"/>
<path d="M706.8 444.8 L739.0 441.8" stroke="#555555" stroke-width="1.2"/>
<path d="M706.8 447.7 L706.8 477.0" stroke="#555555" stroke-width="1.2"/>
<path d="M742.0 444.8 L743.4 477.0" stroke="#555555" stroke-width="1.1"/>
<path d="M700.9 309.9 C704.3 307.0 715.5 295.7 721.4 292.3 C727.3 288.9 733.6 289.8 736.1 289.3" stroke="#c8c8c8" stroke-width="1.0"/>
<path d="M660.0 268.0 C666.7 267.7 686.7 264.7 700.0 266.0 C713.3 267.3 733.3 274.3 740.0 276.0" stroke="#c8c8c8" stroke-width="1.0"/>
<path d="M683.0 380.0 C684.2 386.7 686.8 407.3 690.0 420.0 C693.2 432.7 700.0 450.0 702.0 456.0" stroke="#c8c8c8" stroke-width="1.0"/>
<path d="M661.0 395.0 C660.8 396.7 659.2 403.8 659.5 405.0 C659.8 406.2 662.4 402.5 663.0 402.0" stroke="#555555" stroke-width="1.0"/>
<path d="M707 447 Q725 453 736 445" stroke="#c8c8c8" stroke-width="1.0"/>
<path d="M735.0 380.0 C736.7 386.7 742.2 411.3 745.0 420.0 C747.8 428.7 750.8 430.0 752.0 432.0" stroke="#c8c8c8" stroke-width="1.0"/>
<path d="M814.3 149.4 C817.9 147.1 829.8 138.6 835.8 135.8 C841.8 133.1 847.7 133.4 850.1 132.9" stroke="#555555" stroke-width="1.2"/>
<path d="M816.0 150.0 C819.3 148.0 830.0 140.8 836.0 138.0 C842.0 135.2 849.3 133.8 852.0 133.0" stroke="#8a8a8a" stroke-width="1.0"/>
<path d="M817.2 151.5 C817.1 156.5 816.4 173.0 816.5 181.6 C816.6 190.2 817.1 197.2 817.9 203.1 C818.7 209.0 819.6 212.2 821.2 216.9 C822.9 221.6 826.1 227.6 827.8 231.2 C829.5 234.9 830.8 235.2 831.7 239.1 C832.6 243.0 832.8 252.1 833.0 254.7" stroke="#555555" stroke-width="1.3"/>
<path d="M885.2 125.8 C886.8 131.1 891.6 150.4 894.6 157.3 C897.6 164.2 897.5 162.3 903.2 167.3 C908.9 172.3 924.6 184.1 928.9 187.4" stroke="#555555" stroke-width="1.2"/>
<path d="M927.5 187.4 C928.0 189.8 929.7 196.3 930.4 201.7 C931.1 207.1 931.9 209.4 931.8 220.0 C931.7 230.6 929.3 250.5 929.6 265.0 C929.9 279.5 932.9 299.9 933.6 306.9" stroke="#555555" stroke-width="1.2"/>
<path d="M932.2 306.4 L921.2 350.2" stroke="#555555" stroke-width="1.1"/>
<path d="M846.6 144.4 L851.6 155.8 L845.8 163.7" stroke="#555555" stroke-width="1.1"/>
<path d="M843.0 174.5 C842.5 182.1 840.9 206.0 840.1 220.0 C839.3 234.0 838.5 252.2 838.2 258.6" stroke="#555555" stroke-width="1.1"/>
<path d="M838.0 180.0 L836.0 250.0" stroke="#c8c8c8" stroke-width="1.0"/>
<path d="M815.8 150.1 L886.0 220.0" stroke="#8a8a8a" stroke-width="1.0"/>
<path d="M926.1 187.4 L886.0 220.0" stroke="#c8c8c8" stroke-width="1.0"/>
<path d="M870 117 Q892 118 888 135 Q880 150 860 152 Q845 150 850 135 Q856 120 870 117 Z" stroke="#c8c8c8" stroke-width="1.0"/>
<path d="M875 123 Q860 125 856 138 Q858 145 870 143 Q885 138 886 130" stroke="#c8c8c8" stroke-width="1.0"/>
<path d="M847.3 138.7 Q843 170.2 874.5 171.6 Q891.7 170.2 894.6 157.3" stroke="#c8c8c8" stroke-width="1.0"/>
<path d="M854.4 130.1 L894.6 170.2" stroke="#c8c8c8" stroke-width="1.0"/>
<path d="M851.6 151.5 Q860.2 150.1 868.8 147.2" stroke="#8a8a8a" stroke-width="1.0"/>
<path d="M891.7 220 Q897.4 198.8 914.6 197.4 Q928.9 203.1 932 220 Q930 238 912 238 Q897 235 893 222" stroke="#c8c8c8" stroke-width="1.0"/>
<path d="M905.0 205.0 C906.7 209.2 915.0 222.5 915.0 230.0 C915.0 237.5 906.7 246.7 905.0 250.0" stroke="#c8c8c8" stroke-width="1.0"/>
<path d="M881.1 213.0 L877.2 256.0" stroke="#555555" stroke-width="1.1"/>
<path d="M883.0 215.0 L880.0 270.0" stroke="#c8c8c8" stroke-width="1.0"/>
<path d="M817.3 213.0 L801.7 256.0 L802.4 288.5 L817.3 295.0" stroke="#555555" stroke-width="1.2"/>
<path d="M821.2 220.8 L803.0 254.7" stroke="#555555" stroke-width="1.1"/>
<path d="M801.7 263.8 L813.4 265.1" stroke="#555555" stroke-width="1.0"/>
<path d="M831.7 239.1 L817.3 265.1" stroke="#555555" stroke-width="1.2"/>
<path d="M817.3 267.7 C817.5 270.3 817.3 279.4 818.6 283.3 C819.9 287.2 824.1 289.8 825.2 291.1" stroke="#555555" stroke-width="1.1"/>
<path d="M823.9 233.9 C827.6 236.5 837.5 243.0 846.0 249.5 C854.5 256.0 869.8 269.0 874.6 272.9" stroke="#555555" stroke-width="1.2"/>
<path d="M825.2 259.9 L847.3 248.2" stroke="#555555" stroke-width="1.1"/>
<path d="M833.0 265.1 C834.5 267.3 835.8 273.3 842.1 278.1 C848.4 282.9 865.9 291.1 870.7 293.8" stroke="#555555" stroke-width="1.2"/>
<path d="M870.7 267.7 L890.0 258.6" stroke="#555555" stroke-width="1.1"/>
<path d="M872.0 293.8 L890.0 285.9" stroke="#555555" stroke-width="1.1"/>
<path d="M827.1 263.8 L833.0 300.0" stroke="#555555" stroke-width="1.2"/>
<path d="M790.0 250.0 C792.5 247.5 800.8 239.2 805.0 235.0 C809.2 230.8 813.3 226.7 815.0 225.0" stroke="#c8c8c8" stroke-width="1.0"/>
<path d="M795.0 290.0 L805.0 270.0" stroke="#c8c8c8" stroke-width="1.0"/>
<path d="M839.1 297.3 L875.6 326.5 L892.0 317.4" stroke="#555555" stroke-width="1.2"/>
<path d="M870.1 293.6 L875.6 326.5" stroke="#555555" stroke-width="1.1"/>
<path d="M862.8 290.0 L881.1 291.8" stroke="#555555" stroke-width="1.0"/>
<path d="M862.8 321.0 C864.3 324.9 868.6 337.7 872.0 344.7 C875.4 351.7 880.8 356.0 882.9 363.0 C885.0 370.0 884.4 382.8 884.7 386.7" stroke="#555555" stroke-width="1.2"/>
<path d="M875.6 344.7 Q884.7 352 900.3 338.4" stroke="#555555" stroke-width="1.1"/>
<path d="M894.0 259.9 C895.0 267.7 898.9 295.2 900.1 306.9 C901.3 318.6 901.3 321.6 901.2 330.0 C901.1 338.4 899.6 352.9 899.3 357.5" stroke="#555555" stroke-width="1.1"/>
<path d="M899.3 357.5 Q912.1 366.6 924.9 352" stroke="#555555" stroke-width="1.1"/>
<path d="M924.9 357.5 L912.1 375.8 L919.4 383.1 L924.9 361.2" stroke="#555555" stroke-width="1.1"/>
<path d="M884.7 379.4 C887.5 379.1 896.0 376.4 901.2 377.6 C906.4 378.8 913.4 385.2 915.8 386.7" stroke="#555555" stroke-width="1.1"/>
<path d="M884.7 392.2 Q892 384.9 910.3 399.5 L899.3 414.1 L901.2 421.4" stroke="#555555" stroke-width="1.2"/>
<path d="M884.7 399.5 Q888.4 410.4 899.3 414.1" stroke="#555555" stroke-width="1.1"/>
<path d="M906.6 377.6 L908.5 392.2" stroke="#555555" stroke-width="1.0"/>
<path d="M830 313.7 Q839.1 326.5 848.2 330.1 L846.4 342.9 L830 342.9" stroke="#555555" stroke-width="1.1"/>
<path d="M853.7 304.6 L848.2 332.0" stroke="#555555" stroke-width="1.1"/>
<path d="M837.3 352.0 L830.0 353.9" stroke="#555555" stroke-width="1.0"/>
<path d="M827.1 331.6 L809.8 355.1 L837.0 351.4" stroke="#555555" stroke-width="1.2"/>
<path d="M880.0 395.0 C880.3 399.2 879.5 414.5 882.0 420.0 C884.5 425.5 892.8 426.7 895.0 428.0" stroke="#c8c8c8" stroke-width="1.0"/>
<path d="M865.0 330.0 C866.2 336.7 869.8 356.7 872.0 370.0 C874.2 383.3 877.0 403.3 878.0 410.0" stroke="#c8c8c8" stroke-width="1.0"/>
<path d="M905.0 300.0 C906.2 305.0 912.0 320.0 912.0 330.0 C912.0 340.0 906.2 355.0 905.0 360.0" stroke="#c8c8c8" stroke-width="1.0"/>
<path d="M898 300 Q915 290 932 300" stroke="#c8c8c8" stroke-width="1.0"/>
<path d="M898 340 Q912 350 928 338" stroke="#c8c8c8" stroke-width="1.0"/>
<path d="M805.0 330.0 C806.2 334.2 812.0 347.5 812.0 355.0 C812.0 362.5 806.2 371.7 805.0 375.0" stroke="#c8c8c8" stroke-width="1.0"/>
<path d="M822.8 529.7 C820.5 524.8 812.9 511.7 808.8 500.0 C804.6 488.3 797.8 469.0 797.8 459.4 C797.8 449.8 803.5 446.6 808.8 442.2 C814.0 437.8 822.2 434.1 829.0 432.8 C835.8 431.5 842.9 432.3 849.4 434.4 C855.9 436.5 863.4 440.4 868.1 445.3 C872.8 450.2 875.9 457.5 877.5 464.0 C879.1 470.5 877.5 481.0 877.5 484.4" stroke="#555555" stroke-width="1.2"/>
<path d="M800.0 462.0 C802.0 468.3 807.7 489.5 812.0 500.0 C816.3 510.5 823.6 520.8 825.9 525.0" stroke="#c8c8c8" stroke-width="1.0"/>
<path d="M827.5 440.6 Q813.4 456.25 815 478.1" stroke="#c8c8c8" stroke-width="1.0"/>
<path d="M833.75 492.2 Q855.6 493.75 868.1 481.25 L871.25 456.25" stroke="#8a8a8a" stroke-width="1.0"/>
<path d="M869.7 481.25 Q875.9 490.6 868.1 500" stroke="#8a8a8a" stroke-width="1.0"/>
<path d="M831.4 485.9 L831.4 494.5" stroke="#555555" stroke-width="1.1"/>
<path d="M863.4 501.6 C863.9 504.5 864.8 514.3 866.6 518.8 C868.4 523.2 870.5 525.8 874.4 528.1 C878.3 530.4 887.4 532.0 890.0 532.8" stroke="#555555" stroke-width="1.2"/>
<path d="M824.4 528.1 C828.3 525.5 841.3 516.9 847.8 512.5 C854.3 508.1 860.8 503.4 863.4 501.6" stroke="#8a8a8a" stroke-width="1.0"/>
<path d="M867.6 520 Q875.2 531.4 898.1 531.4 L931.1 531.4 Q941.2 537.8 942.5 558.1" stroke="#555555" stroke-width="1.2"/>
<path d="M942.5 558.1 C942.3 564.0 939.7 580.9 941.2 593.6 C942.7 606.3 948.6 621.9 951.4 634.2 C954.1 646.5 957.3 657.1 957.7 667.2 C958.1 677.4 954.5 690.5 953.9 695.1" stroke="#555555" stroke-width="1.2"/>
<path d="M936.0 545.0 C937.5 554.2 942.3 582.5 945.0 600.0 C947.7 617.5 950.8 641.7 952.0 650.0" stroke="#8a8a8a" stroke-width="1.0"/>
<path d="M908.2 616.4 C904.4 622.3 889.8 642.7 885.4 652.0 C881.0 661.3 882.0 665.5 881.6 672.3 C881.2 679.1 882.6 689.2 882.8 692.6" stroke="#8a8a8a" stroke-width="1.0"/>
<path d="M882.8 692.6 L910.8 664.7 Q926 654.5 941.2 664.7 L951.4 685 L953.9 695.1" stroke="#555555" stroke-width="1.1"/>
<path d="M903.1 707.8 L953.9 692.6" stroke="#555555" stroke-width="1.1"/>
<path d="M880.3 692.6 L920.9 662.1" stroke="#8a8a8a" stroke-width="1.0"/>
<ellipse cx="913.3" cy="570.8" rx="24" ry="34" transform="rotate(20 913.3 570.8)" stroke="#c8c8c8" stroke-width="1.1"/>
<path d="M887.9 550.5 L920.9 646.9" stroke="#8a8a8a" stroke-width="1.0"/>
<path d="M905.7 542.8 L882.8 608.8" stroke="#c8c8c8" stroke-width="1.0"/>
<path d="M903.1 601.2 L920.9 649.4" stroke="#8a8a8a" stroke-width="1.0"/>
<path d="M791.7 558.1 L831.1 541.6" stroke="#555555" stroke-width="1.2"/>
<path d="M800.6 560.6 C806.5 558.1 822.9 549.8 836.1 545.4 C849.3 541.0 872.7 535.9 880.0 534.0" stroke="#555555" stroke-width="1.1"/>
<path d="M795.5 560.6 C794.9 566.5 793.0 583.8 791.7 596.1 C790.4 608.4 790.6 622.8 787.9 634.2 C785.1 645.6 778.6 652.4 775.2 664.7 C771.8 677.0 768.9 700.6 767.6 707.8" stroke="#8a8a8a" stroke-width="1.1"/>
<path d="M800.6 573.3 C801.9 579.2 807.1 597.8 808.2 608.8 C809.3 619.8 811.0 626.2 807.0 639.3 C803.0 652.4 787.9 679.5 784.1 687.5" stroke="#555555" stroke-width="1.1"/>
<path d="M785.0 580.0 C784.2 590.0 782.2 621.7 780.0 640.0 C777.8 658.3 773.3 681.7 772.0 690.0" stroke="#c8c8c8" stroke-width="1.0"/>
<path d="M787.9 636.8 Q798.1 641.8 808.2 639.3" stroke="#c8c8c8" stroke-width="1.0"/>
<path d="M815.8 593.6 Q848.8 591.1 874.2 598.7 L869.1 601.2 L836.1 596.1" stroke="#8a8a8a" stroke-width="1.0"/>
<path d="M817.1 550.5 L815.8 613.9" stroke="#c8c8c8" stroke-width="1.0"/>
<path d="M836.1 555.5 L832.3 629.1" stroke="#c8c8c8" stroke-width="1.0"/>
<path d="M827.3 652.0 L814.6 695.1" stroke="#c8c8c8" stroke-width="1.0"/>
<path d="M815.8 608.8 Q848.8 601.2 880 616.4 Q905 630 920 660" stroke="#c8c8c8" stroke-width="1.0"/>
<path d="M836.1 710.4 Q856.4 690 880 677.4" stroke="#c8c8c8" stroke-width="1.0"/>
<path d="M826.0 545.4 C826.9 545.8 829.6 547.0 831.1 547.9 C832.6 548.8 834.3 550.1 834.9 550.5" stroke="#8a8a8a" stroke-width="1.0"/>
<path d="M223.6 661.0 C225.6 650.1 231.2 614.0 235.5 595.8 C239.8 577.6 245.7 551.9 249.7 551.9 C253.7 551.9 256.5 580.9 259.6 595.8 C262.7 610.7 266.7 633.5 268.1 641.1" stroke="#7a7a7a" stroke-width="1.1"/>
<path d="M235.5 601.5 L266.7 607.2" stroke="#7a7a7a" stroke-width="1.1"/>
<path d="M278.0 629.8 C278.9 619.4 281.3 583.3 283.7 567.5 C286.1 551.7 289.6 536.3 292.2 534.9 C294.8 533.5 297.1 550.0 299.2 559.0 C301.3 568.0 303.9 583.8 304.9 588.7" stroke="#7a7a7a" stroke-width="1.1"/>
<path d="M289.3 581.7 L306.3 576.0" stroke="#7a7a7a" stroke-width="1.1"/>
<path d="M317.6 584.5 C319.5 581.2 325.2 569.7 329.0 564.7 C332.8 559.7 337.0 555.7 340.3 554.7 C343.6 553.8 345.5 555.7 348.8 559.0 C352.1 562.3 352.1 571.5 360.1 574.6 C368.1 577.7 388.0 578.6 397.0 577.4 C406.0 576.2 408.3 568.7 414.0 567.5 C419.7 566.3 426.8 566.8 431.0 570.3 C435.2 573.8 438.1 585.6 439.5 588.7" stroke="#7a7a7a" stroke-width="1.1"/>
<path d="M319.1 585.9 C314.6 587.8 296.0 590.1 292.0 597.0 C288.0 603.9 292.1 619.9 295.0 627.0 C297.9 634.1 306.8 637.6 309.2 639.7" stroke="#7a7a7a" stroke-width="1.1"/>
<path d="M442.3 602.9 C444.7 604.5 454.4 607.8 456.5 612.8 C458.6 617.8 455.2 629.3 455.0 632.6" stroke="#7a7a7a" stroke-width="1.1"/>
<path d="M310.6 598.7 L351.6 602.9" stroke="#7a7a7a" stroke-width="1.1"/>
<path d="M319.1 603.2 L353.1 604.9" stroke="#7a7a7a" stroke-width="1.0"/>
<path d="M330.0 603.6 L348.0 604.4" stroke="#555555" stroke-width="1.7"/>
<path d="M384.2 601.5 L423.9 599.2" stroke="#7a7a7a" stroke-width="1.1"/>
<path d="M387.0 607.2 L421.0 609.4" stroke="#7a7a7a" stroke-width="1.0"/>
<path d="M397.0 608.0 L414.0 608.9" stroke="#555555" stroke-width="1.7"/>
<path d="M321 605 Q314 606 315.5 610.5 Q317.5 613 321.5 612" stroke="#7a7a7a" stroke-width="1.1"/>
<path d="M412.8 613 Q412 622 416.8 622 Q421 622 420.5 614 M426 613 Q425.5 622 430.2 622 Q435 622 434.6 614" stroke="#7a7a7a" stroke-width="1.1"/>
<path d="M336.1 646.8 L337.5 629.8 Q368.6 612 405.5 629.8 L408.3 646.8" stroke="#7a7a7a" stroke-width="1.1"/>
<path d="M326.1 635.5 Q320 655.3 351.6 656.7 M397 656.7 Q419.6 658.1 419.6 646.8" stroke="#7a7a7a" stroke-width="1.1"/>
<path d="M354.5 644 Q355 635.5 362 636 Q368 637 368.6 644 Q371 634 380 634 Q387 634 387 642.6" stroke="#7a7a7a" stroke-width="1.1"/>
<path d="M266.5 640 Q268 634 275 637.1 Q276 627 283 627.5 Q289 628 291 637.1 Q296 632 300.2 634.9 Q307 636 307 640.3 L302.5 648.6 L309.3 666.9" stroke="#7a7a7a" stroke-width="1.1"/>
<path d="M265.8 636 Q265 652 268.1 653.2 Q276 646 279.6 648.6 Q284 652 286.4 664.6" stroke="#7a7a7a" stroke-width="1.1"/>
<path d="M445.1 666.6 L443.7 638.3 Q448 635.5 453.6 646.8 Q465 629.8 473.5 632.6 L472 644 Q493.3 638.3 490.5 652.5 Q482 658.1 490.5 663.8 L479.1 672.3" stroke="#7a7a7a" stroke-width="1.1"/>
<path d="M307.7 618.5 L314.8 632.6" stroke="#7a7a7a" stroke-width="1.0"/>
<path d="M433.8 628.4 L428.1 644.0" stroke="#7a7a7a" stroke-width="1.0"/>
</svg>
<div id="topbar"></div>
<div id="side"></div>
<svg id="ui" width="1024" height="768" style="position:absolute;left:0;top:0">
<!-- top bar circles -->
<g fill="#171717">
<circle cx="118.7" cy="25" r="18"/><circle cx="181.8" cy="25" r="18"/><circle cx="244.7" cy="25" r="18"/><circle cx="307.6" cy="25" r="18"/>
</g>
<g fill="#9b9b9b" stroke="none">
<!-- wrench -->
<mask id="wm"><rect x="100" y="0" width="40" height="50" fill="#fff"/><circle cx="125.8" cy="18.1" r="4.2" fill="#000"/></mask>
<circle cx="122.3" cy="21.5" r="6.3" mask="url(#wm)"/>
<line x1="111.4" y1="32.4" x2="120.5" y2="23.3" stroke="#9b9b9b" stroke-width="3.6" stroke-linecap="round"/>
<!-- wand -->
<line x1="177.2" y1="33.2" x2="189" y2="21.4" stroke="#9b9b9b" stroke-width="3.6" stroke-linecap="round"/>
<line x1="182.4" y1="23.6" x2="186.6" y2="27.8" stroke="#171717" stroke-width="1.1"/>
<path d="M177.9 16.2 Q178.3 20.1 182.2 20.5 Q178.3 20.9 177.9 24.8 Q177.5 20.9 173.6 20.5 Q177.5 20.1 177.9 16.2Z"/>
<circle cx="184.4" cy="17.6" r="1.5"/>
<!-- S -->
<g stroke="#9b9b9b" stroke-width="3.0" stroke-linecap="round" fill="none">
<path d="M243.6 18.9 Q244.6 17.7 247 17.7 L253 17.7"/>
<path d="M242.5 23.1 L246 27.5" stroke-width="3.2"/>
<path d="M237.2 32.8 L242.4 32.8 Q244.8 32.7 246 32"/>
</g>
<!-- arrow -->
<path d="M317 16.5 L301.2 23.6 L305.6 25.4 L299.6 31.4 Q299.6 33.6 301.8 33.4 L307.8 27.4 L309.8 32 Z"/>
<line x1="300.8" y1="32.4" x2="307" y2="26.2" stroke="#9b9b9b" stroke-width="3" stroke-linecap="round"/>
</g>
<!-- dots -->
<g fill="#8e8e8e"><circle cx="504.4" cy="9.5" r="2.6"/><circle cx="512" cy="9.5" r="2.6"/><circle cx="519.5" cy="9.5" r="2.6"/></g>
<!-- brush -->
<g fill="#1a74f2">
<path d="M694.5 28.9 Q700.5 21.5 707.8 14.3 Q712.4 10.2 714.3 10.8 Q715.3 12 712.2 15.8 Q704.5 24 696 30.3 Z"/>
<path d="M696 31.2 Q696 34.8 692 37.2 Q687.5 39.4 682.3 38.8 Q684.8 37.2 685.8 34.2 Q687 30.6 690.8 29.8 Q694.4 29.3 696 31.2Z"/>
</g>
<!-- smudge -->
<path fill="#c8c8c8" d="M780 10.8 L786.6 17.2 L784 20.4 L784 25.8 Q783.6 28 781.6 30 L775.2 35.2 Q773.2 36.2 772.2 34.6 L778.8 27.4 L778 26.8 L763.6 38.4 Q760.4 39.4 759.4 37.2 Q759.2 35.6 760.8 33.6 L765.4 28 Q762.6 26 762.8 22.6 Q763.2 19.4 766.4 15.6 Q768.2 13.8 771 13.6 L776.8 13.6 Z"/>
<!-- eraser -->
<g transform="translate(847.6 25) rotate(-42)" fill="#c8c8c8">
<path d="M-8.5 -6.4 L11 -6.4 Q14.8 -6.4 14.8 -2.6 L14.8 6.4 L-8.5 6.4 Z"/>
<path d="M-14.7 -6.4 L-9.5 -6.4 L-9.5 6.4 L-11.2 6.4 Q-14.7 6.4 -14.7 2.9 Z"/>
</g>
<!-- layers -->
<rect x="915.5" y="11.4" width="20.5" height="20.8" rx="3.2" fill="#c8c8c8"/>
<rect x="908.7" y="17.9" width="20.8" height="21.1" rx="3.2" fill="#c8c8c8" stroke="#1e1e1e" stroke-width="1.4"/>
<!-- color -->
<circle cx="996.9" cy="25.1" r="16.8" fill="#000" stroke="#7a7a7a" stroke-width="2"/>
<!-- sidebar -->
<rect x="3.5" y="139" width="33.3" height="162.8" rx="5" fill="#262626"/>
<rect x="4" y="264" width="32" height="16" rx="4" fill="#b0b0b0"/>
<rect x="11.9" y="330.9" width="16.4" height="16.8" rx="4" fill="none" stroke="#9a9a9a" stroke-width="2"/>
<rect x="3.6" y="378.3" width="32.9" height="162" rx="5" fill="#262626"/>
<rect x="4" y="427.6" width="32" height="15.9" rx="4" fill="#adadad"/>
<g fill="none" stroke="#a0a0a0" stroke-width="2.1" stroke-linecap="round">
<path d="M17 560.6 L22.8 560.6 Q28.3 560.6 28.3 565.2 Q28.3 569.9 22.8 569.9 L13.5 569.9"/>
</g>
<path d="M11.6 560.6 L17.9 556.8 L17.9 564.4 Z" fill="#a0a0a0"/>
<g fill="none" stroke="#363636" stroke-width="2.1" stroke-linecap="round">
<path d="M23 600.8 L16.6 600.8 Q12 600.8 12 605.2 Q12 609.7 16.6 609.7 L26.4 609.7"/>
</g>
<path d="M28 600.8 L21.8 597 L21.8 604.6 Z" fill="#363636"/>
<text x="17.6" y="32" font-family="Liberation Sans" font-size="20.8" fill="#b5b5b5" textLength="61.5" lengthAdjust="spacingAndGlyphs">Gallery</text>
</svg>

</body></html>
